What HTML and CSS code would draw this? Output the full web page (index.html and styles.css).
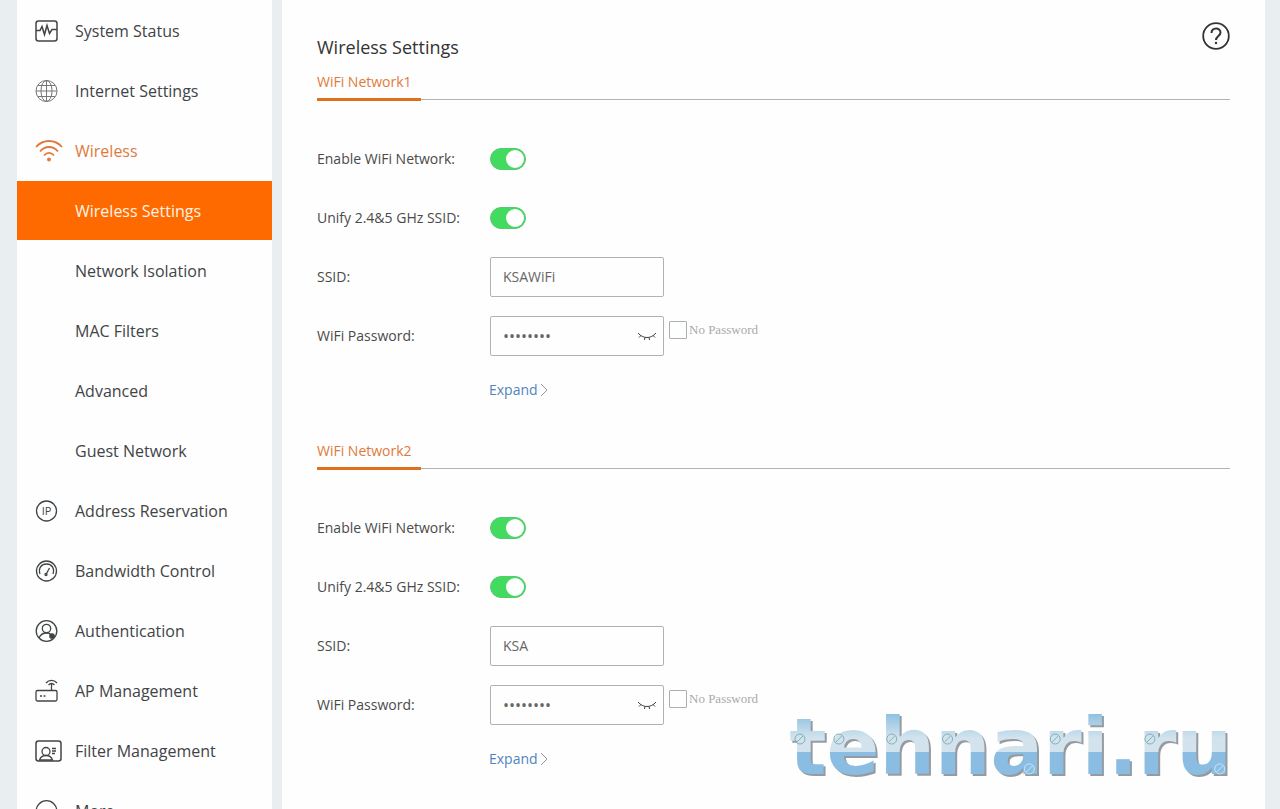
FILE: index.html
```html
<!DOCTYPE html>
<html lang="en">

<head>
    <meta charset="UTF-8">
    <meta name="viewport" content="width=device-width, initial-scale=1.0">
    <title>Wireless Settings</title>
    <link rel="stylesheet" href="styles.css">
</head>

<body>
    <div class="layout">
        <nav class="sidebar">
            <a class="menu-item" href="#status">
                <svg class="icon" viewBox="0 0 28 24">
                    <rect x="1" y="2" width="21" height="20" rx="2.5" stroke-width="1.5" />
                    <path d="M1 11.5h4l2-4 2.5 8 2.5-9 2.5 8 2.5-4H22" stroke-width="1.5" />
                </svg>
                <span>System Status</span>
            </a>
            <a class="menu-item" href="#internet">
                <svg class="icon icon-light" viewBox="0 0 28 24">
                    <circle cx="11.5" cy="12" r="10.5" />
                    <ellipse cx="11.5" cy="12" rx="5.5" ry="10.5" />
                    <path d="M11.5 1.5v21M1 12h21M3 6.5h17M3 17.5h17" />
                </svg>
                <span>Internet Settings</span>
            </a>
            <a class="menu-item open" href="#wireless">
                <svg class="icon" viewBox="0 0 28 24">
                    <path d="M1 8C8 0 20 0 27 8M5 12.5c5-6 13-6 18 0M9 16.5c3-3.5 7-3.5 10 0" stroke-width="1.8" />
                    <circle class="fill" cx="14" cy="20.5" r="1.3" />
                </svg>
                <span>Wireless</span>
            </a>
            <a class="menu-item sub active" href="#settings">Wireless Settings</a>
            <a class="menu-item sub" href="#isolation">Network Isolation</a>
            <a class="menu-item sub" href="#mac">MAC Filters</a>
            <a class="menu-item sub" href="#advanced">Advanced</a>
            <a class="menu-item sub" href="#guest">Guest Network</a>
            <a class="menu-item" href="#address">
                <svg class="icon" viewBox="0 0 28 24">
                    <circle cx="11.5" cy="12" r="10" />
                    <text class="icon-text" x="11.5" y="16" text-anchor="middle">IP</text>
                </svg>
                <span>Address Reservation</span>
            </a>
            <a class="menu-item" href="#bandwidth">
                <svg class="icon" viewBox="0 0 28 24">
                    <circle cx="11.5" cy="12" r="10" />
                    <path d="M5 15C3 9 6.500 5 11.5 5S20 9 18 15M11.5 14.500l3-5.500" />
                    <circle cx="11" cy="15.5" r="1" />
                </svg>
                <span>Bandwidth Control</span>
            </a>
            <a class="menu-item" href="#auth">
                <svg class="icon" viewBox="0 0 28 24">
                    <circle cx="11.5" cy="12" r="10.3" />
                    <circle cx="11.5" cy="9.5" r="4.2" />
                    <path d="M4 19c1.5-3.5 4-5 7.5-5 2 0 3.5.5 4.500 1.500" />
                    <circle class="fill" cx="17" cy="17" r="2.2" />
                </svg>
                <span>Authentication</span>
            </a>
            <a class="menu-item" href="#ap">
                <svg class="icon" viewBox="0 0 28 24">
                    <rect x="1" y="11.5" width="21" height="10.5" rx="1.5" />
                    <path d="M16.5 11.500V5M11 4c3-3.500 8-3.500 11 0M13.500 6c2-2 4-2 6 0M5 17h2M8.500 17h2" />
                </svg>
                <span>AP Management</span>
            </a>
            <a class="menu-item" href="#filter">
                <svg class="icon" viewBox="0 0 28 24">
                    <rect x="1" y="2" width="25" height="20" rx="2.5" stroke-width="1.5" />
                    <circle cx="11" cy="12.5" r="4" />
                    <path d="M4.500 21c1-3 3.500-4.500 6.500-4.500s5.500 1.500 6.500 4.500zM17 9.500h4M17 12h4M17 14.500h3" />
                </svg>
                <span>Filter Management</span>
            </a>
            <a class="menu-item" href="#more">
                <svg class="icon" viewBox="0 0 28 24">
                    <circle cx="11.5" cy="12" r="10.3" />
                    <path d="M6 12h2M10.500 12h2M15 12h2" />
                </svg>
                <span>More</span>
            </a>
        </nav>

        <main class="content">
            <header class="content-header">
                <h1>Wireless Settings</h1>
                <button class="help" type="button" aria-label="Help">
                    <svg viewBox="0 0 28 28">
                        <circle cx="14" cy="14" r="12.8" stroke-width="1.8" />
                        <path d="M9.5 11c0-6 9-6 9-.5 0 3.500-4.500 3.500-4.500 7.500" stroke-width="2" />
                        <circle class="fill" cx="14" cy="21" r="1.2" stroke="none" />
                    </svg>
                </button>
            </header>

            <form class="network">
                <div class="tabs"><h2>WiFi Network1</h2></div>
                <div class="row">
                    <label for="enable1">Enable WiFi Network:</label>
                    <input class="switch" type="checkbox" id="enable1" checked>
                </div>
                <div class="row">
                    <label for="unify1">Unify 2.4&amp;5 GHz SSID:</label>
                    <input class="switch" type="checkbox" id="unify1" checked>
                </div>
                <div class="row">
                    <label for="ssid1">SSID:</label>
                    <input class="field" type="text" id="ssid1" value="KSAWiFi">
                </div>
                <div class="row">
                    <label for="password1">WiFi Password:</label>
                    <div class="password">
                        <input class="field" type="password" id="password1" value="12345678">
                        <button class="eye" type="button" aria-label="Show password">
                            <svg viewBox="0 0 20 10">
                                <path d="M1 2c5 6 13 6 18 0M4 4.500L2 6.500M8 6.200L7.500 9M12 6.200l.5 2.800M16 4.500l2 2" />
                            </svg>
                        </button>
                    </div>
                    <div class="no-password">
                        <input type="checkbox" id="open1">
                        <label for="open1">No Password</label>
                    </div>
                </div>
                <div class="expand">
                    <a href="#expand1">Expand <svg viewBox="0 0 8 14"><path d="M1 1l6 6-6 6" /></svg></a>
                </div>
            </form>

            <form class="network">
                <div class="tabs"><h2>WiFi Network2</h2></div>
                <div class="row">
                    <label for="enable2">Enable WiFi Network:</label>
                    <input class="switch" type="checkbox" id="enable2" checked>
                </div>
                <div class="row">
                    <label for="unify2">Unify 2.4&amp;5 GHz SSID:</label>
                    <input class="switch" type="checkbox" id="unify2" checked>
                </div>
                <div class="row">
                    <label for="ssid2">SSID:</label>
                    <input class="field" type="text" id="ssid2" value="KSA">
                </div>
                <div class="row">
                    <label for="password2">WiFi Password:</label>
                    <div class="password">
                        <input class="field" type="password" id="password2" value="12345678">
                        <button class="eye" type="button" aria-label="Show password">
                            <svg viewBox="0 0 20 10">
                                <path d="M1 2c5 6 13 6 18 0M4 4.500L2 6.500M8 6.200L7.500 9M12 6.200l.5 2.800M16 4.500l2 2" />
                            </svg>
                        </button>
                    </div>
                    <div class="no-password">
                        <input type="checkbox" id="open2">
                        <label for="open2">No Password</label>
                    </div>
                </div>
                <div class="expand">
                    <a href="#expand2">Expand <svg viewBox="0 0 8 14"><path d="M1 1l6 6-6 6" /></svg></a>
                </div>
            </form>
        </main>
    </div>

    <div class="watermark">
        <span>tehnari.ru</span>
        <!-- screws on the letters -->
        <svg viewBox="0 0 444 90">
            <g stroke="#7fb0b4">
                <path d="M6 37a5 5 0 1 0 10 0a5 5 0 1 0-10 0M8 40l6-6" />
                <path d="M45 37a5 5 0 1 0 10 0a5 5 0 1 0-10 0M47 40l6-6" />
                <path d="M98 37a5 5 0 1 0 10 0a5 5 0 1 0-10 0M100 40l6-6" />
                <path d="M154 37a5 5 0 1 0 10 0a5 5 0 1 0-10 0M156 40l6-6" />
                <path d="M262 37a5 5 0 1 0 10 0a5 5 0 1 0-10 0M264 40l6-6" />
                <path d="M357 37a5 5 0 1 0 10 0a5 5 0 1 0-10 0M359 40l6-6" />
            </g>
            <g stroke="#c4e6f6">
                <path d="M236 67a5 5 0 1 0 10 0a5 5 0 1 0-10 0M238 70l6-6" />
                <path d="M427 67a5 5 0 1 0 10 0a5 5 0 1 0-10 0M429 70l6-6" />
            </g>
        </svg>
    </div>
</body>

</html>
```
FILE: styles.css
```css
* {
    box-sizing: border-box;
}

body {
    margin: 0;
    background-color: #e9eef1;
    font-family: "Open Sans", "Noto Sans", sans-serif;
    font-size: 14px;
    color: #4a4a4a;
}

svg {
    fill: none;
    stroke: currentColor;
}

.fill {
    fill: currentColor;
}

.layout {
    display: grid;
    grid-template-columns: 255px 1fr;
    gap: 10px;
    height: 100vh;
    padding: 0 15px 0 17px;
    overflow: hidden;
}

.sidebar {
    padding-top: 1px;
    background-color: #fefefe;
    overflow: hidden;
}

.menu-item {
    display: flex;
    align-items: center;
    gap: 12px;
    height: 59px;
    margin-bottom: 1px;
    padding-left: 18px;
    font-size: 16px;
    color: #414446;
    text-decoration: none;
}

.menu-item.sub {
    padding-left: 58px;
}

.menu-item.open {
    color: #e07a3c;
}

.menu-item.active {
    background-color: #ff6a00;
    color: #fff3e4;
}

.icon {
    width: 28px;
    height: 24px;
    overflow: visible;
    stroke-width: 1.3;
}

.icon-light {
    color: #777777;
    stroke-width: 1;
}

.icon-text {
    font-size: 11px;
    fill: currentColor;
    stroke: none;
}

.content {
    padding: 29px 35px 0;
    background-color: #fefefe;
    overflow: hidden;
}

.content-header {
    display: flex;
    justify-content: space-between;
    height: 36px;
}

h1,
h2 {
    margin: 0;
    font-weight: normal;
}

h1 {
    font-size: 18px;
    line-height: 36px;
    color: #333333;
}

button {
    padding: 0;
    border: none;
    background: none;
    cursor: pointer;
}

.help {
    width: 28px;
    height: 28px;
    margin-top: -7px;
    color: #333333;
}

.help svg {
    display: block;
    width: 28px;
    height: 28px;
}

.network {
    margin-bottom: 20px;
}

.tabs {
    display: flex;
    height: 35px;
    margin-bottom: 29px;
    border-bottom: 1px solid #b4b4b4;
}

h2 {
    height: 36px;
    min-width: 104px;
    border-bottom: 3px solid #df7020;
    font-size: 14px;
    line-height: 34px;
    color: #e07a3c;
}

.row {
    display: grid;
    grid-template-columns: 173px auto 1fr;
    align-items: center;
    height: 59px;
}

.switch {
    display: flex;
    justify-content: flex-end;
    appearance: none;
    width: 36px;
    height: 22px;
    margin: 0;
    padding: 1px;
    border: 1px solid #58c873;
    border-radius: 11px;
    background-color: #43db5f;
    cursor: pointer;
}

.switch::before {
    content: "";
    width: 18px;
    height: 18px;
    border-radius: 9px;
    background-color: #ffffff;
}

.switch:not(:checked) {
    justify-content: flex-start;
    background-color: #cccccc;
}

.field {
    width: 174px;
    height: 40px;
    padding: 0 12px;
    border: 1px solid #b0b3b3;
    border-radius: 2px;
    background-color: #fefefe;
    font-family: inherit;
    font-size: 14px;
    color: #666666;
}

.password {
    display: flex;
    align-items: center;
}

.password .field {
    padding-right: 30px;
    font-size: 16px;
}

.eye {
    width: 20px;
    height: 10px;
    margin-left: -27px;
    margin-right: 7px;
    color: #444444;
}

.eye svg {
    display: block;
}

.no-password {
    display: flex;
    align-items: center;
    gap: 2px;
    padding-left: 5px;
    padding-bottom: 12px;
    font-family: "Liberation Serif", serif;
    font-size: 13px;
    color: #a9a9a9;
}

.no-password input {
    appearance: none;
    width: 18px;
    height: 18px;
    margin: 0;
    border: 1px solid #a9b0b0;
    border-radius: 1px;
}

.no-password input:checked {
    background-color: #43db5f;
}

.expand {
    height: 49px;
    padding-left: 172px;
    line-height: 49px;
}

.expand a {
    color: #5085bd;
    text-decoration: none;
}

.expand svg {
    width: 8px;
    height: 14px;
    margin-left: -1px;
    vertical-align: -2px;
    color: #8f9ba8;
}

/* site mark over the page corner */
.watermark {
    position: absolute;
    right: 48px;
    bottom: 17px;
    height: 90px;
    font-family: "DejaVu Sans", sans-serif;
    font-size: 78px;
    font-weight: bold;
    line-height: 90px;
    pointer-events: none;
}

.watermark span {
    background: linear-gradient(#8fc1e2 12px, #d3e3ed 36px, #d3e3ed 50px, #8abde1 50px);
    background-clip: text;
    -webkit-background-clip: text;
    color: transparent;
    filter: drop-shadow(2px 2px 0 #969ba1);
}

.watermark svg {
    position: absolute;
    left: 0;
    top: 0;
    width: 100%;
    height: 90px;
}
```
